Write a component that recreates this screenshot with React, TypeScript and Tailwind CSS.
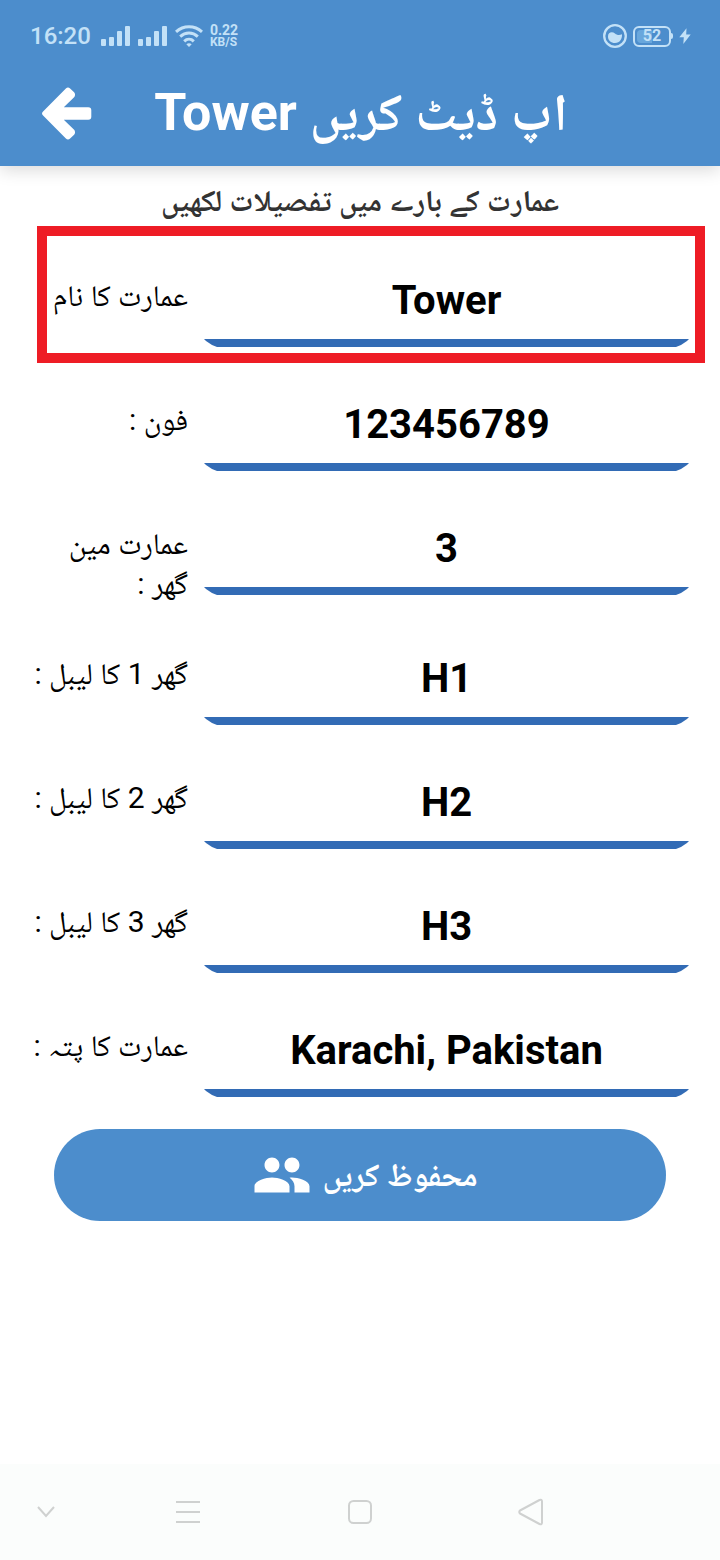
import { MdPeople } from "react-icons/md";

type Field = { id: string; label: string; value: string; type?: string; highlighted?: boolean };

const fields: Field[] = [
  { id: "name", label: "عمارت کا نام", value: "Tower", highlighted: true },
  { id: "phone", label: "فون :", value: "123456789", type: "tel" },
  { id: "houses", label: "عمارت مین گھر :", value: "3" },
  { id: "house1", label: "گھر 1 کا لیبل :", value: "H1" },
  { id: "house2", label: "گھر 2 کا لیبل :", value: "H2" },
  { id: "house3", label: "گھر 3 کا لیبل :", value: "H3" },
  { id: "address", label: "عمارت کا پتہ :", value: "Karachi, Pakistan" },
];

function Signal() {
  return (
    <svg width="30" height="20" viewBox="0 0 30 20" fill="currentColor" aria-hidden="true">
      <rect x="0" y="13" width="5" height="7" rx="1" />
      <rect x="8" y="11" width="5" height="9" rx="1" />
      <rect x="16" y="5" width="5" height="15" rx="1" />
      <rect x="24" y="0" width="5" height="20" rx="1" />
    </svg>
  );
}

function Wifi() {
  return (
    <svg width="28" height="22" viewBox="0 0 28 22" fill="none" stroke="currentColor" strokeWidth="3" aria-hidden="true">
      <path d="M1 6.8C8.500 0 19.500 0 27 6.800" />
      <path d="M5.200 11.600C10.400 6.900 17.600 6.900 22.800 11.600" />
      <path d="M9.200 16.300C12 13.600 16 13.600 18.800 16.300" />
      <path d="M11.300 19.300Q14 17.400 16.700 19.300L14 22Z" fill="currentColor" stroke="none" />
    </svg>
  );
}

function StatusBar() {
  return (
    <div className="flex h-[72px] items-center justify-between pr-[29px] pl-[30px] text-[#c3e1f7]">
      <div className="flex items-center">
        <span className="text-2xl font-medium">16:20</span>
        <span className="ml-2.5 flex gap-[7px]">
          <Signal />
          <Signal />
        </span>
        <span className="ml-[7px]">
          <Wifi />
        </span>
        <span className="ml-[7px] flex flex-col">
          <span className="text-sm leading-3 font-bold">0.22</span>
          <span className="text-xs leading-3 font-bold">KB/S</span>
        </span>
      </div>
      <div className="flex items-center gap-1.5">
        <svg width="24" height="24" viewBox="0 0 24 24" aria-hidden="true">
          <circle cx="12" cy="12" r="10.800" fill="none" stroke="currentColor" strokeWidth="2.300" />
          <path d="M5 12.500C5 8.300 9 7.200 12 9.500C14 11.300 16.500 11.300 19 10.300C19.300 15 17 19 12 19C8 19 5 16.500 5 12.500Z" fill="currentColor" />
        </svg>
        <span className="flex items-center">
          <span className="flex h-[21px] w-[38px] items-center rounded-md border-2 border-current p-0.5">
            <span className="flex h-[13px] w-full items-center justify-center rounded-sm bg-linear-to-r from-[#69a7dc] from-50% to-transparent to-50% text-base font-bold">
              52
            </span>
          </span>
          <span className="h-1.5 w-0.5 rounded-r-sm bg-current" />
        </span>
        <svg width="12" height="16" viewBox="0 0 12 16" fill="currentColor" aria-hidden="true">
          <path d="M7.500 0.300L0.300 9.300H4.800L4.300 16L11.700 6.600H7.200Z" />
        </svg>
      </div>
    </div>
  );
}

function FieldRow({ field }: { field: Field }) {
  return (
    <div className="relative flex items-start gap-4 pr-[31px] pl-7">
      <label
        htmlFor={field.id}
        dir="rtl"
        className="w-40 shrink-0 pt-[33px] pb-[17px] text-3xl leading-10 text-black"
      >
        {field.label}
      </label>
      <div className="min-w-0 flex-1 pb-5">
        <input
          id={field.id}
          type={field.type ?? "text"}
          defaultValue={field.value}
          className="block h-[104px] w-full border-b-8 border-[#326bb5] bg-transparent pt-[18px] text-center text-[40px] font-bold text-black outline-none [clip-path:polygon(0_0,100%_0,100%_calc(100%-8px),calc(100%-2px)_calc(100%-6px),calc(100%-5px)_calc(100%-4px),calc(100%-8px)_calc(100%-2px),calc(100%-13px)_100%,13px_100%,8px_calc(100%-2px),5px_calc(100%-4px),2px_calc(100%-6px),0_calc(100%-8px))]"
        />
      </div>
      {field.highlighted && (
        <div className="pointer-events-none absolute top-[-17px] right-[15px] bottom-[4px] left-[37px] border-10 border-[#ee1c25]" />
      )}
    </div>
  );
}

export default function App() {
  return (
    <div className="flex min-h-screen flex-col bg-white font-[Roboto,'Noto_Naskh_Arabic','Noto_Sans_Arabic','DejaVu_Sans',sans-serif]">
      <header className="bg-[#4c8dcc] text-white shadow-[0_4px_16px_rgba(0,0,0,0.15)]">
        <StatusBar />
        <div className="relative flex h-[94px] items-center justify-center pb-3 pl-0.5">
          <button type="button" aria-label="Back" className="absolute top-[15px] left-[41px]">
            <svg width="51" height="53" viewBox="0 0 51 53" fill="currentColor" stroke="currentColor" strokeWidth="6" strokeLinejoin="round">
              <path d="M4.200 26.500L27 3.600L31 7.500V8L15.500 23.200H47.300V29.800H15.500L31 45V45.500L27 49.400Z" />
            </svg>
          </button>
          <h1 dir="rtl" className="text-[52px] leading-[60px] font-bold whitespace-nowrap">
            اپ ڈیٹ کریں Tower
          </h1>
        </div>
      </header>

      <main className="flex-1">
        <form onSubmit={(e) => e.preventDefault()}>
          <h2 dir="rtl" className="h-[77px] pt-[15px] text-center text-3xl leading-10 font-bold text-[#333333]">
            عمارت کے بارے میں تفصیلات لکھیں
          </h2>
          {fields.map((field) => (
            <FieldRow key={field.id} field={field} />
          ))}
          <div className="px-[54px] pt-3">
            <button
              type="submit"
              className="flex h-[92px] w-full items-center justify-center gap-2.5 rounded-full bg-[#4c8dcc] pl-2.5 text-white"
            >
              <MdPeople className="size-[60px]" />
              <span dir="rtl" className="text-[32px] leading-10 font-bold">
                محفوظ کریں
              </span>
            </button>
          </div>
        </form>
      </main>

      <nav className="grid h-24 grid-cols-[92fr_192fr_152fr_190fr_94fr] bg-[#fbfdfc] text-[#cfd1d0]">
        <button type="button" aria-label="Hide" className="flex items-center justify-center">
          <svg width="18" height="12" viewBox="0 0 18 12" fill="none" stroke="currentColor" strokeWidth="2">
            <path d="M1 1L9 10L17 1" />
          </svg>
        </button>
        <button type="button" aria-label="Menu" className="flex items-center justify-center">
          <svg width="26" height="24" viewBox="0 0 26 24" fill="none" stroke="currentColor" strokeWidth="2">
            <path d="M1 2H25M1 12H25M1 22H25" />
          </svg>
        </button>
        <button type="button" aria-label="Home" className="flex items-center justify-center">
          <svg width="24" height="24" viewBox="0 0 24 24" fill="none" stroke="currentColor" strokeWidth="2">
            <rect x="1" y="1" width="22" height="22" rx="4.500" />
          </svg>
        </button>
        <button type="button" aria-label="Previous" className="flex items-center justify-center">
          <svg width="26" height="28" viewBox="0 0 26 28" fill="none" stroke="currentColor" strokeWidth="2" strokeLinejoin="round">
            <path d="M2 12.500Q0.500 14 2 15.500L21.500 26Q24 27 24 24.500V3.500Q24 1 21.500 2Z" />
          </svg>
        </button>
      </nav>
    </div>
  );
}
